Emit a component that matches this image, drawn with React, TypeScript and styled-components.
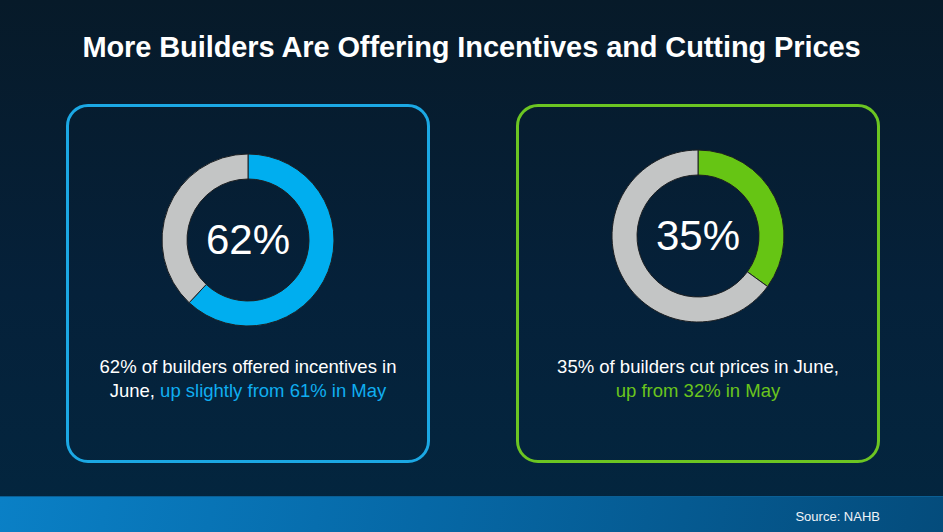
import React from "react";
import styled, { createGlobalStyle } from "styled-components";

const GlobalStyle = createGlobalStyle`
  html, body {
    margin: 0;
    padding: 0;
    width: 943px;
    height: 532px;
    overflow: hidden;
  }
  body {
    font-family: "Liberation Sans", Arial, sans-serif;
    background: #061a2a;
  }
`;

const Slide = styled.div`
  width: 943px;
  height: 532px;
  display: flex;
  flex-direction: column;
  background: linear-gradient(180deg, #071a29 0%, #05213a 55%, #03263f 100%);
`;

const Title = styled.h1`
  margin: 0;
  height: 104px;
  box-sizing: border-box;
  padding-top: 30px;
  text-align: center;
  color: #fff;
  font-size: 29px;
  line-height: 34px;
  font-weight: 700;
  letter-spacing: -0.1px;
`;

const CardRow = styled.div`
  display: flex;
  gap: 86px;
  padding-left: 66px;
`;

const Card = styled.div<{ $accent: string; $chartTop: number }>`
  width: 364px;
  height: 359px;
  box-sizing: border-box;
  border: 3px solid ${({ $accent }) => $accent};
  border-radius: 22px;
  display: flex;
  flex-direction: column;
  align-items: center;
  padding-top: ${({ $chartTop }) => $chartTop}px;
`;

const ChartWrap = styled.div`
  position: relative;
  width: 174px;
  height: 174px;
`;

const BigValue = styled.div`
  position: absolute;
  inset: 0;
  display: flex;
  align-items: center;
  justify-content: center;
  color: #fff;
  font-size: 42px;
`;

const Caption = styled.p<{ $gap: number }>`
  margin: ${({ $gap }) => $gap}px 0 0;
  color: #fff;
  font-size: 18.5px;
  line-height: 23.5px;
  text-align: center;
`;

const Accent = styled.span<{ $color: string }>`
  color: ${({ $color }) => $color};
`;

const Footer = styled.div`
  margin-top: auto;
  height: 36px;
  box-sizing: border-box;
  padding: 4px 63px 0 0;
  display: flex;
  align-items: center;
  justify-content: flex-end;
  background: linear-gradient(100deg, #0a80c6 0%, #0668a6 45%, #044c7c 100%);
  border-top: 1px solid #0b5f94;
  color: #f0f4f8;
  font-size: 13px;
`;

function polar(cx: number, cy: number, r: number, deg: number) {
  const a = ((deg - 90) * Math.PI) / 180;
  return [cx + r * Math.cos(a), cy + r * Math.sin(a)];
}

function segment(R: number, r: number, from: number, to: number) {
  const c = 87;
  const large = to - from > 180 ? 1 : 0;
  const [x1, y1] = polar(c, c, R, from);
  const [x2, y2] = polar(c, c, R, to);
  const [x3, y3] = polar(c, c, r, to);
  const [x4, y4] = polar(c, c, r, from);
  return `M${x1} ${y1} A${R} ${R} 0 ${large} 1 ${x2} ${y2} L${x3} ${y3} A${r} ${r} 0 ${large} 0 ${x4} ${y4} Z`;
}

function Donut({ value, color }: { value: number; color: string }) {
  const end = (value / 100) * 360;
  return (
    <ChartWrap>
      <svg width="174" height="174" viewBox="0 0 174 174">
        <path d={segment(86, 61, 0, end)} fill={color} stroke="#1c1f22" strokeWidth="1" />
        <path d={segment(86, 61, end, 360)} fill="#c3c5c5" stroke="#1c1f22" strokeWidth="1" />
      </svg>
      <BigValue>{value}%</BigValue>
    </ChartWrap>
  );
}

export default function App() {
  return (
    <>
      <GlobalStyle />
      <Slide>
        <Title>More Builders Are Offering Incentives and Cutting Prices</Title>
        <CardRow>
          <Card $accent="#1ba8e4" $chartTop={46}>
            <Donut value={62} color="#00aeef" />
            <Caption $gap={28}>
              62% of builders offered incentives in
              <br />
              June, <Accent $color="#10aef0">up slightly from 61% in May</Accent>
            </Caption>
          </Card>
          <Card $accent="#6cc522" $chartTop={42}>
            <Donut value={35} color="#66c514" />
            <Caption $gap={32}>
              35% of builders cut prices in June,
              <br />
              <Accent $color="#6ac51c">up from 32% in May</Accent>
            </Caption>
          </Card>
        </CardRow>
        <Footer>Source: NAHB</Footer>
      </Slide>
    </>
  );
}
